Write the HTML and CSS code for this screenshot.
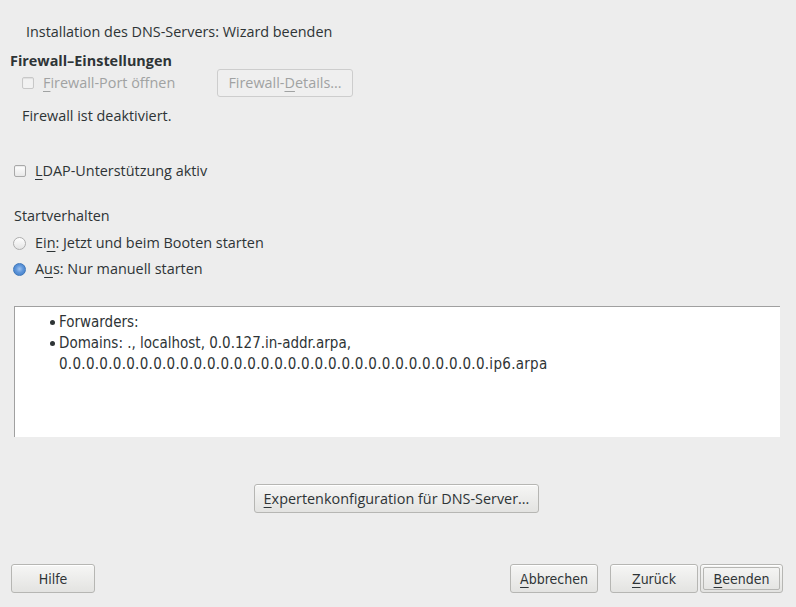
FILE: index.html
```html
<!DOCTYPE html>
<html lang="de">
<head>
<meta charset="utf-8">
<title>Installation des DNS-Servers</title>
<link rel="stylesheet" href="styles.css">
</head>
<body>
<div class="window">
  <div class="title">Installation des DNS-Servers: Wizard beenden</div>

  <div class="section-label">Firewall–Einstellungen</div>
  <div class="fw-row">
    <label class="check disabled"><span class="box"></span><span><u>F</u>irewall-Port öffnen</span></label>
    <button class="btn disabled fw-btn">Firewall-<u>D</u>etails...</button>
  </div>
  <div class="fw-status">Firewall ist deaktiviert.</div>

  <label class="check ldap"><span class="box"></span><span><u>L</u>DAP-Unterstützung aktiv</span></label>

  <div class="start-label">Startverhalten</div>
  <label class="radio r1"><span class="dot"></span><span>Ei<u>n</u>: Jetzt und beim Booten starten</span></label>
  <label class="radio r2 checked"><span class="dot"></span><span>A<u>u</u>s: Nur manuell starten</span></label>

  <div class="richtext">
    <ul>
      <li>Forwarders:</li>
      <li>Domains: ., localhost, 0.0.127.in-addr.arpa,<br><span class="zeros">0.0.0.0.0.0.0.0.0.0.0.0.0.0.0.0.0.0.0.0.0.0.0.0.0.0.0.0.0.0.0.0.ip6.arpa</span></li>
    </ul>
  </div>

  <div class="expert-row">
    <button class="btn expert"><u>E</u>xpertenkonfiguration für DNS-Server...</button>
  </div>

  <div class="spacer"></div>

  <div class="bottom">
    <button class="btn bb help">Hilfe</button>
    <div class="right">
      <button class="btn bb abort"><u>A</u>bbrechen</button>
      <button class="btn bb back"><u>Z</u>urück</button>
      <button class="btn bb finish"><span class="inner"><u>B</u>eenden</span></button>
    </div>
  </div>
</div>
</body>
</html>
```

FILE: styles.css
```css
html, body {
  margin: 0;
  padding: 0;
  background: #ededed;
}
body {
  font-family: "Open Sans", "DejaVu Sans", sans-serif;
  font-size: 14.4px;
  color: #2e3436;
}
u {
  text-decoration: underline;
  text-underline-offset: 3px;
  text-decoration-thickness: 1px;
}
.window {
  height: 607px;
  display: flex;
  flex-direction: column;
  box-sizing: border-box;
}
.title {
  margin-top: 24px;
  padding-left: 26px;
  line-height: 16px;
  color: #2e3436;
}
.section-label {
  margin-top: 13px;
  padding-left: 10px;
  font-weight: bold;
  line-height: 16px;
}
.fw-row {
  display: flex;
  align-items: center;
  padding-left: 22px;
  height: 27px;
}
.check {
  display: flex;
  align-items: center;
  gap: 9px;
  line-height: 16px;
}
.box {
  width: 10px;
  height: 10px;
  border: 1px solid #a9a9a9;
  border-radius: 2px;
  background: linear-gradient(#ffffff, #e8e8e8);
  box-shadow: inset 0 1px 1px rgba(0,0,0,0.08);
}
.check.disabled {
  color: #a0a2a2;
  width: 195px;
}
.check.disabled .box {
  border-color: #c8c8c8;
  background: #f2f2f2;
}
.btn {
  font-family: "Open Sans", "DejaVu Sans", sans-serif;
  font-size: 14.4px;
  color: #2e3436;
  border: 1px solid #b6b6b3;
  border-radius: 3px;
  background: linear-gradient(#f6f6f5, #e3e3e1);
  box-shadow: inset 0 1px 0 #ffffff;
  padding: 0 6px;
  height: 28px;
}
.btn.disabled {
  color: #a0a2a2;
  background: #efefef;
  border-color: #cdcdcd;
  box-shadow: none;
}
.fw-btn {
  width: 136px;
  height: 28px;
}
.fw-status {
  margin-top: 12px;
  padding-left: 22px;
  line-height: 16px;
}
.ldap {
  margin-top: 39px;
  padding-left: 14px;
}
.start-label {
  margin-top: 29px;
  padding-left: 14px;
  line-height: 16px;
}
.radio {
  display: flex;
  align-items: center;
  gap: 9px;
  padding-left: 13px;
  line-height: 16px;
}
.r1 { margin-top: 11px; }
.r2 { margin-top: 10px; }
.dot {
  width: 11px;
  height: 11px;
  border: 1px solid #adadad;
  border-radius: 50%;
  background: linear-gradient(#ffffff, #e4e4e4);
}
.radio.checked .dot {
  border-color: #3f77b9;
  background: radial-gradient(circle at 50% 45%, #9fc3ef 0%, #5d95da 45%, #3d79c4 100%);
}
.richtext {
  margin-top: 29px;
  margin-left: 14px;
  width: 766px;
  height: 131px;
  box-sizing: border-box;
  background: #ffffff;
  border-top: 1px solid #a0a0a0;
  border-left: 1px solid #a0a0a0;
  font-family: "DejaVu Sans Condensed", "DejaVu Sans", sans-serif;
  font-stretch: condensed;
  font-size: 15px;
  color: #2e3436;
}
.richtext ul {
  margin: 5px 0 0 0;
  padding-left: 44px;
  line-height: 21px;
  list-style: none;
}
.richtext li {
  position: relative;
}
.richtext li::before {
  content: "";
  position: absolute;
  left: -9px;
  top: 8px;
  width: 5px;
  height: 5px;
  border-radius: 50%;
  background: #2e3436;
}
.zeros {
  letter-spacing: 0.29px;
}
.expert-row {
  margin-top: 47px;
  padding-left: 254px;
  display: flex;
}
.expert {
  width: 285px;
  height: 29px;
}
.spacer {
  flex: 1;
}
.bottom {
  display: flex;
  justify-content: space-between;
  padding: 0 13px 14px 11px;
}
.right {
  display: flex;
  gap: 12px;
}
.bb {
  font-family: "DejaVu Sans Condensed", "DejaVu Sans", sans-serif;
  font-stretch: condensed;
  font-size: 14px;
  width: 84px;
  height: 29px;
}
.abort { width: 88px; }
.back { width: 88px; margin-right: -10px; }
.finish {
  width: 83px;
  padding: 2px;
}
.finish .inner {
  display: flex;
  align-items: center;
  justify-content: center;
  height: 100%;
  box-sizing: border-box;
  border: 1px solid #b6b6b3;
  border-radius: 2px;
}
```
